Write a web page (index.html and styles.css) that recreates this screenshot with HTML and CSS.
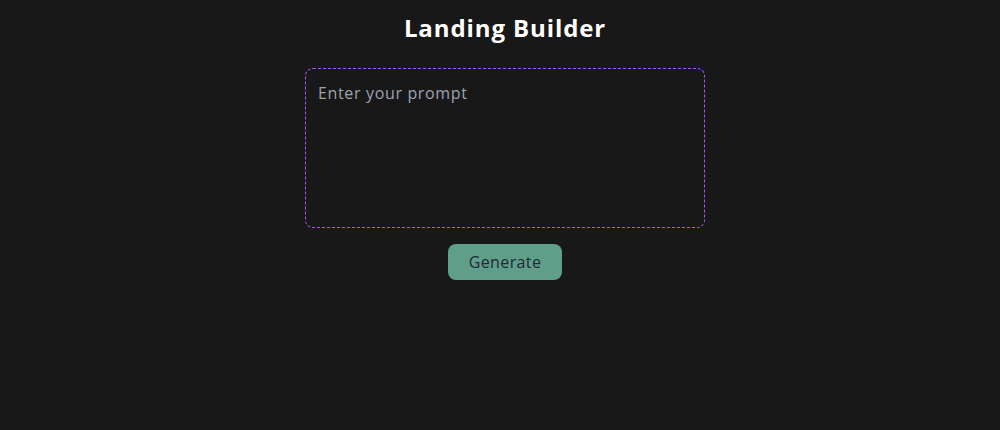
FILE: index.html
```html
<!DOCTYPE html>
<html lang="en">
<head>
<meta charset="utf-8">
<title>Landing Builder</title>
<link rel="stylesheet" href="styles.css">
</head>
<body>
<main class="app">
  <h1 class="title">Landing Builder</h1>
  <textarea class="prompt" placeholder="Enter your prompt"></textarea>
  <button class="generate" type="button">Generate</button>
</main>
</body>
</html>
```

FILE: styles.css
```css
html, body {
  margin: 0;
  padding: 0;
  background: #181818;
  height: 100%;
}
body {
  font-family: "Open Sans", "DejaVu Sans", sans-serif;
  color: #fff;
}
.app {
  display: flex;
  flex-direction: column;
  align-items: center;
  padding-top: 12px;
  padding-left: 10px;
}
.title {
  margin: 0;
  font-size: 24px;
  line-height: 32px;
  font-weight: 700;
  letter-spacing: 0.9px;
  color: #ffffff;
}
.prompt {
  box-sizing: border-box;
  margin-top: 24px;
  width: 400px;
  height: 160px;
  background: #181818;
  border: 1px dashed #a855f7;
  border-radius: 8px;
  padding: 12px;
  font-family: inherit;
  font-size: 16px;
  line-height: 24px;
  letter-spacing: 0.65px;
  color: #e5e7eb;
  resize: none;
  outline: none;
}
.prompt::placeholder {
  color: #9ca3af;
}
.generate {
  margin-top: 16px;
  width: 114px;
  height: 36px;
  border: none;
  border-radius: 8px;
  background: #5f9e88;
  color: #1f2937;
  font-family: inherit;
  font-size: 16px;
  letter-spacing: 0.4px;
  cursor: pointer;
}
```
